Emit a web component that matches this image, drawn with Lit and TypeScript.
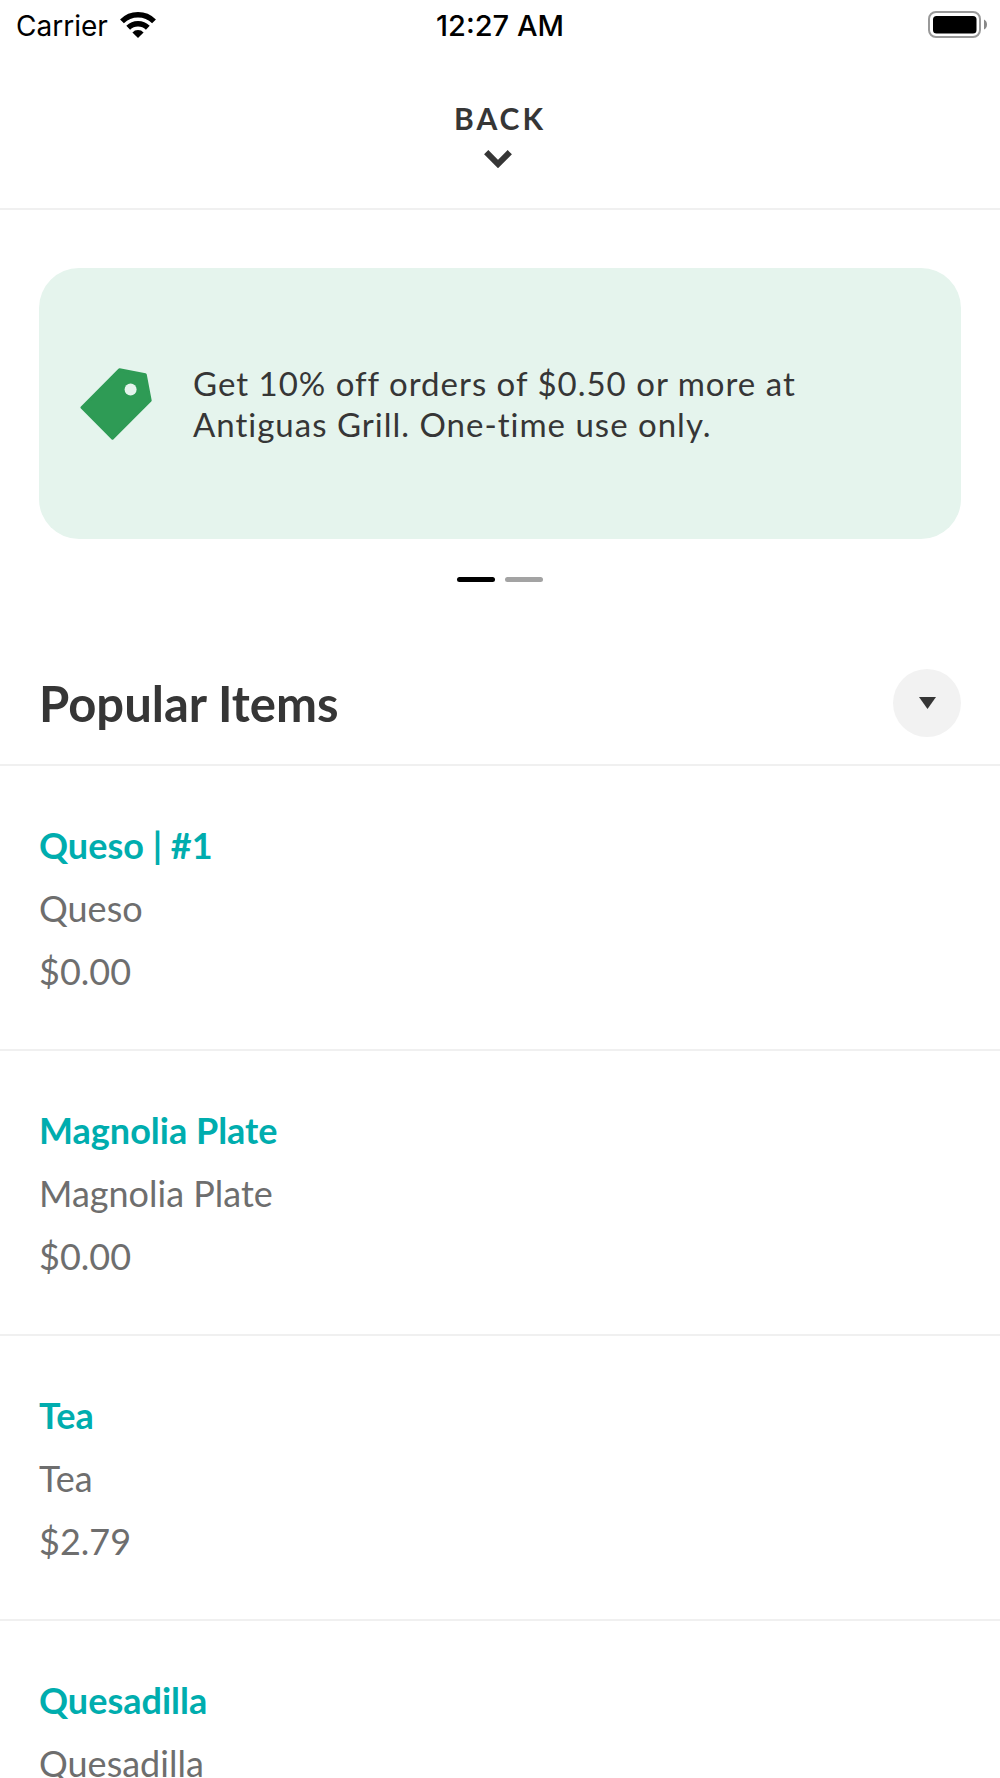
import { LitElement, html, css, nothing } from "lit";
import { customElement, property, state } from "lit/decorators.js";
import { classMap } from "lit/directives/class-map.js";

interface MenuItem {
  name: string;
  description: string;
  price?: string;
}

const ITEMS: MenuItem[] = [
  { name: "Queso | #1", description: "Queso", price: "$0.00" },
  { name: "Magnolia Plate", description: "Magnolia Plate", price: "$0.00" },
  { name: "Tea", description: "Tea", price: "$2.79" },
  { name: "Quesadilla", description: "Quesadilla" },
];

@customElement("status-bar")
export class StatusBar extends LitElement {
  static styles = css`
    :host {
      display: grid;
      grid-template-columns: 1fr auto 1fr;
      align-items: center;
      padding: 9px 12px 7px;
      font-family: Inter, sans-serif;
      font-size: 28px;
      line-height: 34px;
      color: #000;
    }
    .carrier {
      display: flex;
      align-items: center;
      gap: 12px;
      padding-left: 4px;
    }
    .time {
      font-size: 29px;
      font-weight: 500;
    }
    .battery {
      justify-self: end;
    }
    svg {
      display: block;
    }
  `;

  render() {
    return html`
      <div class="carrier">
        <span>Carrier</span>
        <svg width="36" height="30" viewBox="0 0 36 30" aria-hidden="true">
          <g fill="none" stroke="#000" stroke-width="5.4">
            <path d="M2 10.4 A22.5 22.5 0 0 1 34 10.4" />
            <path d="M8.2 16.8 A14 14 0 0 1 27.8 16.8" />
          </g>
          <path d="M12.4 21.4 A8 8 0 0 1 23.6 21.4 L18 27 Z" />
        </svg>
      </div>
      <span class="time">12:27 AM</span>
      <svg class="battery" width="60" height="32" viewBox="0 0 60 32" aria-hidden="true">
        <rect x="1" y="2" width="51" height="25" rx="7" fill="none" stroke="#999" stroke-width="2" />
        <rect x="5" y="6" width="43.500" height="17.500" rx="3.500" />
        <path d="M56 9.500 Q59 11 59 14.500 Q59 18 56 19.500 Z" fill="#888" />
      </svg>
    `;
  }
}

@customElement("promo-card")
export class PromoCard extends LitElement {
  static styles = css`
    :host {
      display: flex;
      align-items: center;
      gap: 41px;
      min-height: 271px;
      box-sizing: border-box;
      padding: 41px 41px 40px;
      border-radius: 40px;
      background: #e5f4ed;
    }
    .tag {
      flex: none;
    }
    .text {
      margin: 0;
      max-width: 640px;
      font-size: 33px;
      line-height: 41px;
      letter-spacing: 1px;
      color: #363636;
    }
  `;

  render() {
    return html`
      <svg class="tag" width="72" height="72" viewBox="0 0 72 72" aria-hidden="true">
        <path
          fill="#2e9b55"
          stroke="#2e9b55"
          stroke-width="3"
          stroke-linejoin="round"
          fill-rule="evenodd"
          d="M39.500 1.700 L65.300 6.800 L70.200 32.500 L32.500 70.200 L2 39.500 Z"
        />
        <circle cx="50.600" cy="21.400" r="6" fill="#e5f4ed" />
      </svg>
      <p class="text"><slot></slot></p>
    `;
  }
}

@customElement("menu-row")
export class MenuRow extends LitElement {
  @property({ attribute: false }) item!: MenuItem;

  static styles = css`
    :host {
      display: flex;
      flex-direction: column;
      gap: 20px;
      padding: 58px 39px 56px;
      border-bottom: 2px solid #f0f0f0;
      font-size: 36px;
      line-height: 43px;
      color: #6e6e6e;
    }
    .name {
      margin: 0;
      font-size: 36px;
      font-weight: 700;
    }
    .link {
      color: #00adae;
      text-decoration: none;
    }
    .detail {
      margin: 0;
    }
  `;

  render() {
    const { name, description, price } = this.item;
    return html`
      <h2 class="name"><a class="link" href="#">${name}</a></h2>
      <p class="detail">${description}</p>
      ${price ? html`<p class="detail">${price}</p>` : nothing}
    `;
  }
}

@customElement("app-root")
export class AppRoot extends LitElement {
  @state() private page = 0;

  static styles = css`
    :host {
      display: flex;
      flex-direction: column;
      height: 100vh;
      background: #fff;
      font-family: Lato, sans-serif;
      color: #363636;
    }
    button {
      margin: 0;
      padding: 0;
      border: 0;
      background: none;
      color: inherit;
      font: inherit;
      cursor: pointer;
    }
    svg {
      display: block;
    }
    .header {
      display: flex;
      justify-content: center;
      padding: 50px 0 40px;
      border-bottom: 2px solid #f0f0f0;
    }
    .back {
      display: flex;
      flex-direction: column;
      align-items: center;
      gap: 14px;
      font-size: 30px;
      font-weight: 700;
      line-height: 36px;
      letter-spacing: 3px;
    }
    .chevron {
      margin-right: 3px;
    }
    .content {
      flex: 1;
      min-height: 0;
      overflow-y: auto;
      scrollbar-width: none;
    }
    .promos {
      padding: 58px 39px 0;
    }
    .pager {
      display: flex;
      justify-content: center;
      gap: 10px;
      padding: 38px 0 0;
    }
    .dot {
      width: 38px;
      height: 5px;
      border-radius: 3px;
      background: #a3a3a3;
    }
    .dot.active {
      background: #000;
    }
    .section {
      display: flex;
      align-items: center;
      justify-content: space-between;
      padding: 87px 39px 27px;
      border-bottom: 2px solid #f0f0f0;
    }
    .title {
      margin: 0;
      font-size: 49px;
      font-weight: 700;
      line-height: 68px;
    }
    .toggle {
      display: grid;
      place-items: center;
      width: 68px;
      height: 68px;
      border-radius: 50%;
      background: #f2f2f2;
    }
  `;

  render() {
    return html`
      <status-bar></status-bar>
      <header class="header">
        <button class="back" type="button">
          BACK
          <svg class="chevron" width="28" height="18" viewBox="0 0 28 18" aria-hidden="true">
            <path d="M2.200 2.200 L14 14 L25.800 2.200" fill="none" stroke="#363636" stroke-width="6" />
          </svg>
        </button>
      </header>
      <main class="content">
        <div class="promos">
          <promo-card>Get 10% off orders of $0.50 or more at Antiguas Grill. One-time use only.</promo-card>
        </div>
        <nav class="pager" aria-label="Offers">
          ${[0, 1].map(
            (i) => html`<button
              type="button"
              class=${classMap({ dot: true, active: i === this.page })}
              aria-label=${`Offer ${i + 1}`}
              @click=${() => (this.page = i)}
            ></button>`
          )}
        </nav>
        <div class="section">
          <h1 class="title">Popular Items</h1>
          <button class="toggle" type="button" aria-label="Choose section">
            <svg width="18" height="12" viewBox="0 0 18 12" aria-hidden="true">
              <path d="M1 0 H18 L9.500 12 Z" fill="#363636" />
            </svg>
          </button>
        </div>
        ${ITEMS.map((item) => html`<menu-row .item=${item}></menu-row>`)}
      </main>
    `;
  }
}
